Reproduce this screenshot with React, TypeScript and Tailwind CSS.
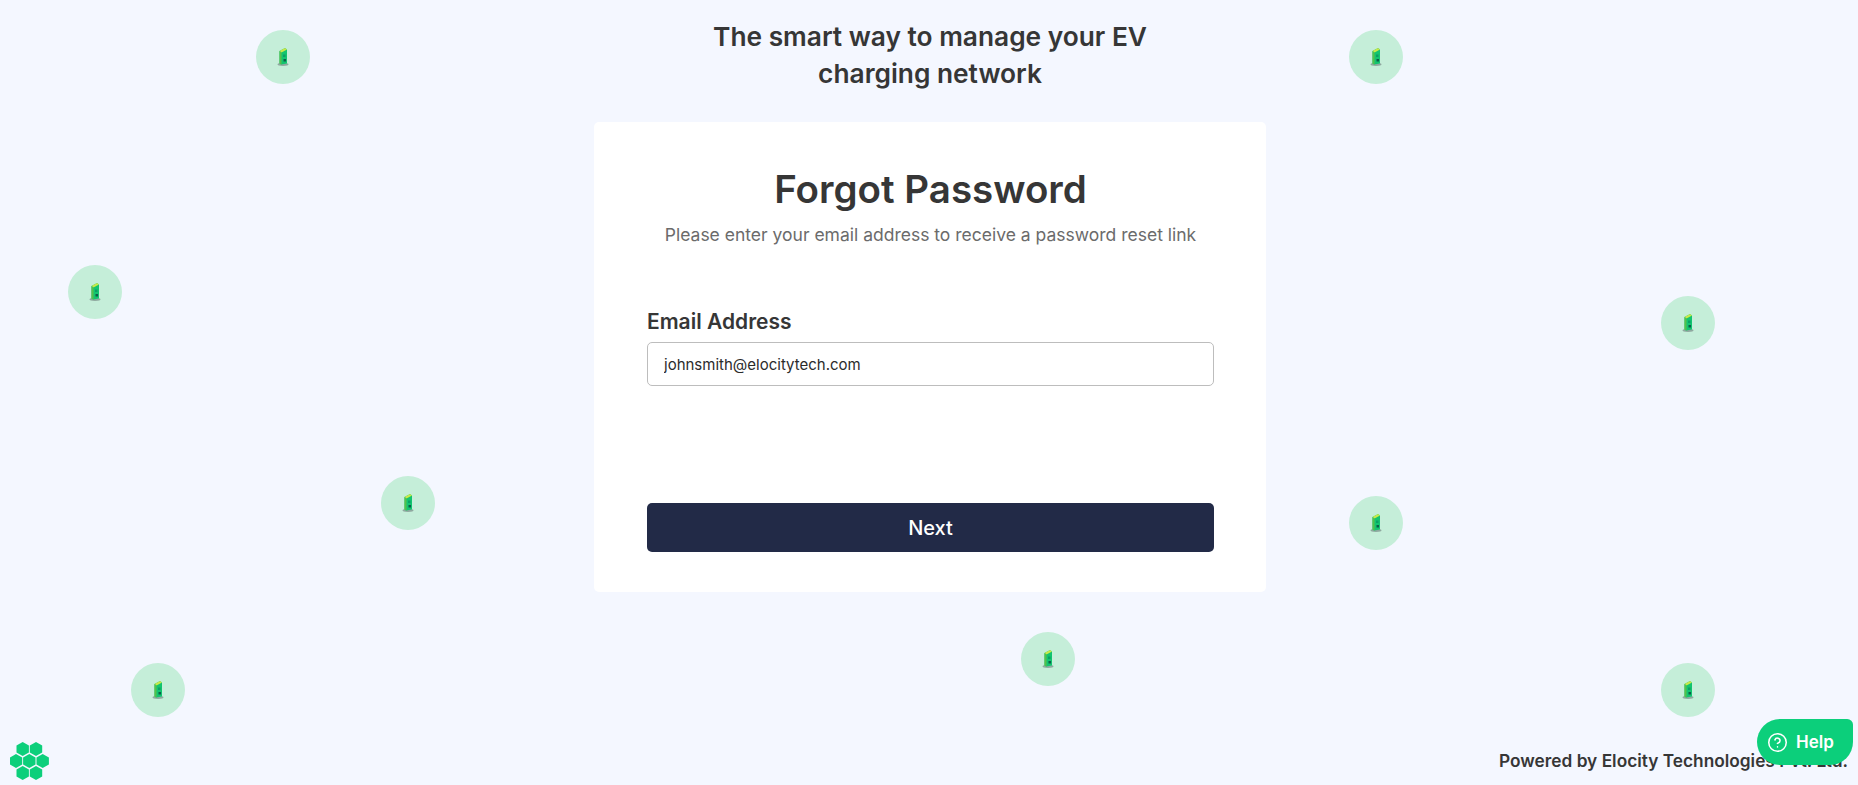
import { CircleHelp } from "lucide-react";

const pins = [
  { id: 1, x: 283, y: 57 },
  { id: 2, x: 1376, y: 57 },
  { id: 3, x: 95, y: 292 },
  { id: 4, x: 1688, y: 323 },
  { id: 5, x: 408, y: 503 },
  { id: 6, x: 1376, y: 523 },
  { id: 7, x: 158, y: 690 },
  { id: 8, x: 1048, y: 659 },
  { id: 9, x: 1688, y: 690 },
];

function Charger() {
  return (
    <svg width="14" height="22" viewBox="0 0 14 22">
      <ellipse cx="7" cy="18.5" rx="5.5" ry="1.4" fill="#6b7a78" opacity="0.6" />
      <path d="M3.5 5 L9 2 L11 3.5 L11 17.5 L5 18.5 L3.5 17.5 Z" fill="#12c46f" />
      <path d="M3.5 5 L9 2 L11 3.5 L5.5 6.5 Z" fill="#c8e84a" />
      <path d="M3.5 5 L5.5 6.5 L5.5 18.5 L3.5 17.5 Z" fill="#57bf4c" />
      <rect x="7" y="8.5" width="2.5" height="2.5" fill="#0b9f65" />
      <rect x="7.5" y="13" width="2.5" height="2.5" fill="#0a5f4a" />
    </svg>
  );
}

function Logo() {
  const hex = "M0 -7 L6.2 -3.5 L6.2 3.5 L0 7 L-6.2 3.5 L-6.2 -3.5 Z";
  const cells = [
    [12.7, 8],
    [26, 8],
    [6, 20],
    [19.3, 20],
    [32.7, 20],
    [12.7, 32],
    [26, 32],
  ];
  return (
    <svg width="40" height="40" viewBox="0 0 40 40">
      {cells.map(([x, y]) => (
        <path key={`${x}-${y}`} d={hex} transform={`translate(${x} ${y})`} fill="#0ccf7b" />
      ))}
    </svg>
  );
}

export default function App() {
  return (
    <div className="relative flex h-[785px] flex-col overflow-hidden bg-[#f4f7ff] font-['Inter',sans-serif] text-[#363636]">
      {/* charger pins on the map */}
      {pins.map((pin) => (
        <div
          key={pin.id}
          className="absolute flex h-[54px] w-[54px] -translate-x-1/2 -translate-y-1/2 items-center justify-center rounded-full bg-[#c5eed9]"
          style={{ left: pin.x, top: pin.y }}
        >
          <Charger />
        </div>
      ))}

      <main className="relative flex flex-col items-center pt-[18px] pl-[2px]">
        <h1 className="w-[520px] text-center text-[26.3px] leading-[37px] font-semibold">
          The smart way to manage your EV
          <br />
          charging network
        </h1>

        <div className="mt-[30px] h-[470px] w-[672px] rounded-[5px] bg-white pt-[39px] pr-[52px] pl-[53px]">
          <h2 className="text-center text-[38.5px] leading-[56px] font-semibold">Forgot Password</h2>
          <p className="mt-[4px] text-center text-[17.5px] leading-[28px] text-[#6b6b6b]">
            Please enter your email address to receive a password reset link
          </p>

          <label className="mt-[59px] block text-[21px] leading-[28px] font-semibold">Email Address</label>
          <input
            readOnly
            value="johnsmith@elocitytech.com"
            className="mt-[6px] block h-[44px] w-full rounded-[5px] border border-[#bdbdbd] bg-white px-4 text-[15px] text-[#2b2b2b] outline-none"
          />

          <button className="mt-[117px] block h-[49px] w-full rounded-[5px] bg-[#222a47] text-[20px] font-medium text-white">
            Next
          </button>
        </div>
      </main>

      <footer className="relative mt-auto flex items-end justify-between pr-[10px] pb-[4px] pl-[10px]">
        <Logo />
        <span className="pb-[8px] text-[17.3px] leading-[24px] font-semibold">
          Powered by Elocity Technologies Pvt. Ltd.
        </span>
      </footer>

      <button className="absolute top-[719px] right-[5px] flex h-[46px] w-[96px] items-center gap-[8px] rounded-tl-[24px] rounded-tr-[6px] rounded-br-[24px] rounded-bl-[24px] bg-[#0ccf7b] pt-[1px] pl-[10px] text-[17px] font-semibold text-white">
        <CircleHelp size={21} strokeWidth={1.75} />
        Help
      </button>
    </div>
  );
}
